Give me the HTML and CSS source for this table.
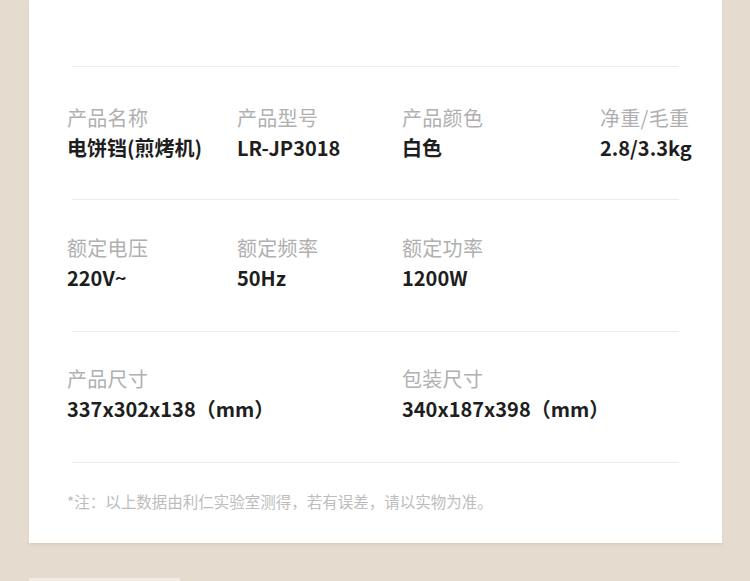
FILE: index.html
```html
<!DOCTYPE html>
<html lang="zh-CN">
<head>
<meta charset="utf-8">
<title>产品参数</title>
<link rel="stylesheet" href="styles.css">
</head>
<body>
<div class="page">
  <section class="card">
    <div class="top-space"></div>
    <hr class="rule">
    <div class="row four r1">
      <div class="item"><div class="label">产品名称</div><div class="value">电饼铛(煎烤机)</div></div>
      <div class="item"><div class="label">产品型号</div><div class="value">LR-JP3018</div></div>
      <div class="item"><div class="label">产品颜色</div><div class="value">白色</div></div>
      <div class="item"><div class="label">净重/毛重</div><div class="value">2.8/3.3kg</div></div>
    </div>
    <hr class="rule">
    <div class="row four r2">
      <div class="item"><div class="label">额定电压</div><div class="value">220V~</div></div>
      <div class="item"><div class="label">额定频率</div><div class="value">50Hz</div></div>
      <div class="item"><div class="label">额定功率</div><div class="value">1200W</div></div>
    </div>
    <hr class="rule">
    <div class="row two r3">
      <div class="item"><div class="label">产品尺寸</div><div class="value">337x302x138（mm）</div></div>
      <div class="item"><div class="label">包装尺寸</div><div class="value">340x187x398（mm）</div></div>
    </div>
    <hr class="rule">
    <p class="note">*注：以上数据由利仁实验室测得，若有误差，请以实物为准。</p>
  </section>
  <div class="next-card"></div>
</div>
</body>
</html>
```

FILE: styles.css
```css
html, body {
  margin: 0;
  padding: 0;
  background: #e6dbcf;
}
body {
  font-family: "Noto Sans CJK SC", "Noto Sans", sans-serif;
  width: 750px;
  height: 581px;
  overflow: hidden;
}
.page {
  padding: 0 28px 0 29px;
}
.card {
  background: #ffffff;
  height: 543px;
  padding: 0 43px 0 38px;
  box-sizing: border-box;
  box-shadow: 0 2px 2px rgba(200, 185, 170, 0.35);
}
.top-space {
  height: 66px;
}
.rule {
  margin: 0 0 0 5px;
  border: 0;
  height: 1px;
  background: #ebebeb;
}
.row {
  display: grid;
}
.r1 {
  padding: 36px 0 36px;
}
.r2 {
  padding: 33px 0 38px;
}
.r3 {
  padding: 32px 0 38px;
}
.four {
  grid-template-columns: 170px 165px 198px auto;
}
.two {
  grid-template-columns: 335px auto;
}
.item {
  white-space: nowrap;
}
.label {
  font-size: 20px;
  line-height: 30px;
  color: #b0b0b0;
  letter-spacing: 0.3px;
}
.value {
  font-size: 20px;
  line-height: 30px;
  color: #1e1e1e;
  font-weight: 700;
}
.note {
  margin: 27px 0 0;
  font-size: 15.5px;
  line-height: 22px;
  color: #bdbdbd;
}
.next-card {
  margin-top: 35px;
  width: 151px;
  height: 3px;
  background: #f1ebe4;
}
```
